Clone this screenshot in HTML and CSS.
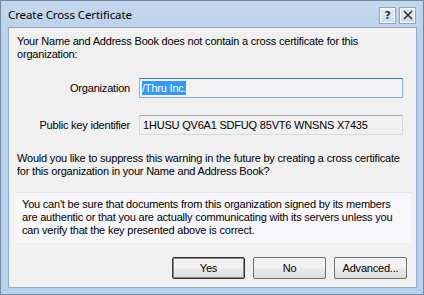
FILE: index.html
```html
<!DOCTYPE html>
<html lang="en">
<head>
  <meta charset="UTF-8" />
  <title>Create Cross Certificate</title>
  <link rel="stylesheet" href="styles.css">
</head>
<body>

  <div class="window">
    <div class="titlebar">
      <span class="title">Create Cross Certificate</span>
      <div class="title-buttons">
        <span class="tbtn">?</span>
        <span class="tbtn">
          <svg width="10" height="10" viewBox="0 0 10 10"><path d="M1 1 L9 9 M9 1 L1 9" stroke="#333" stroke-width="1.6" fill="none"/></svg>
        </span>
      </div>
    </div>

    <div class="client">
      <p class="msg">Your Name and Address Book does not contain a cross certificate for this organization:</p>

      <div class="fields">
        <label class="field-label">Organization</label>
        <div class="field focused"><span class="selected">/Thru Inc.</span></div>
        <label class="field-label">Public key identifier</label>
        <div class="field readonly">1HUSU QV6A1 SDFUQ 85VT6 WNSNS X7435</div>
      </div>

      <p class="msg question">Would you like to suppress this warning in the future by creating a cross certificate for this organization in your Name and Address Book?</p>

      <div class="note">You can't be sure that documents from this organization signed by its members are authentic or that you are actually communicating with its servers unless you can verify that the key presented above is correct.</div>

      <div class="buttons">
        <button class="btn default">Yes</button>
        <button class="btn">No</button>
        <button class="btn">Advanced...</button>
      </div>
    </div>
  </div>

</body>
</html>
```

FILE: styles.css
```css
body {
  margin: 0;
  background: #fff;
  font-family: 'Liberation Sans', Arial, sans-serif;
  font-size: 11px;
  letter-spacing: -0.2px;
  color: #000;
}

.window {
  width: 424px;
  height: 295px;
  box-sizing: border-box;
  display: flex;
  flex-direction: column;
  background: linear-gradient(#c4d7ed, #b9d1ea 40px, #b9d1ea);
  border: 1px solid #6f8ba8;
}

.titlebar {
  height: 26px;
  display: flex;
  align-items: center;
  justify-content: space-between;
  padding: 0 8px 0 7px;
}

.title {
  font-family: 'Noto Sans', sans-serif;
  font-size: 11.5px;
  letter-spacing: -0.1px;
  color: #000;
}

.title-buttons {
  display: flex;
  gap: 5px;
  margin-top: 2px;
}

.tbtn {
  width: 13px;
  height: 13px;
  display: flex;
  align-items: center;
  justify-content: center;
  border: 1px solid #fff;
  outline: 1px solid #8aa3bf;
  background: linear-gradient(#e4eef9, #c9dbee);
  font-family: 'DejaVu Sans', sans-serif;
  font-weight: bold;
  font-size: 11px;
  color: #333;
}

.client {
  flex: 1;
  margin: 0 6px 6px 7px;
  background: #f0f0f0;
  border: 1px solid #94aac4;
  padding: 7px 8px 0 8px;
}

.msg {
  margin: 0;
  line-height: 13px;
}

.fields {
  display: grid;
  grid-template-columns: 113px 264px;
  column-gap: 9px;
  row-gap: 17px;
  align-items: center;
  margin-top: 17px;
}

.field-label {
  text-align: right;
}

.field {
  height: 20px;
  box-sizing: border-box;
  padding: 0 2px;
  display: flex;
  align-items: center;
}

.focused {
  background: #f3f3f3;
  border: 1px solid #7eb4ea;
  border-top-color: #3d7bad;
}

.selected {
  background: #3399ff;
  color: #fff;
  padding: 1px 0;
}

.readonly {
  background: #f0f0f0;
  border: 1px solid #d9d9d9;
  border-top-color: #ababab;
  padding-left: 3px;
}

.question {
  margin-top: 17px;
}

.note {
  margin-top: 14px;
  margin-left: -2px;
  margin-right: -3px;
  padding: 5px 7px 6px 7px;
  background: #f7f7fc;
  border-top: 1px solid #e6e6ee;
  line-height: 13px;
}

.buttons {
  display: flex;
  justify-content: flex-end;
  gap: 8px;
  margin-top: 14px;
  margin-right: 1px;
}

.btn {
  width: 73px;
  height: 22px;
  font-family: 'Liberation Sans', Arial, sans-serif;
  font-size: 11px;
  letter-spacing: -0.2px;
  color: #000;
  background: linear-gradient(#f2f2f2 50%, #ebebeb 50%, #dddddd);
  border: 1px solid #707070;
  border-radius: 2px;
  padding: 0;
}

.btn.default {
  border-color: #303030;
  box-shadow: inset 0 0 0 1px #8a8a8a;
}
```
